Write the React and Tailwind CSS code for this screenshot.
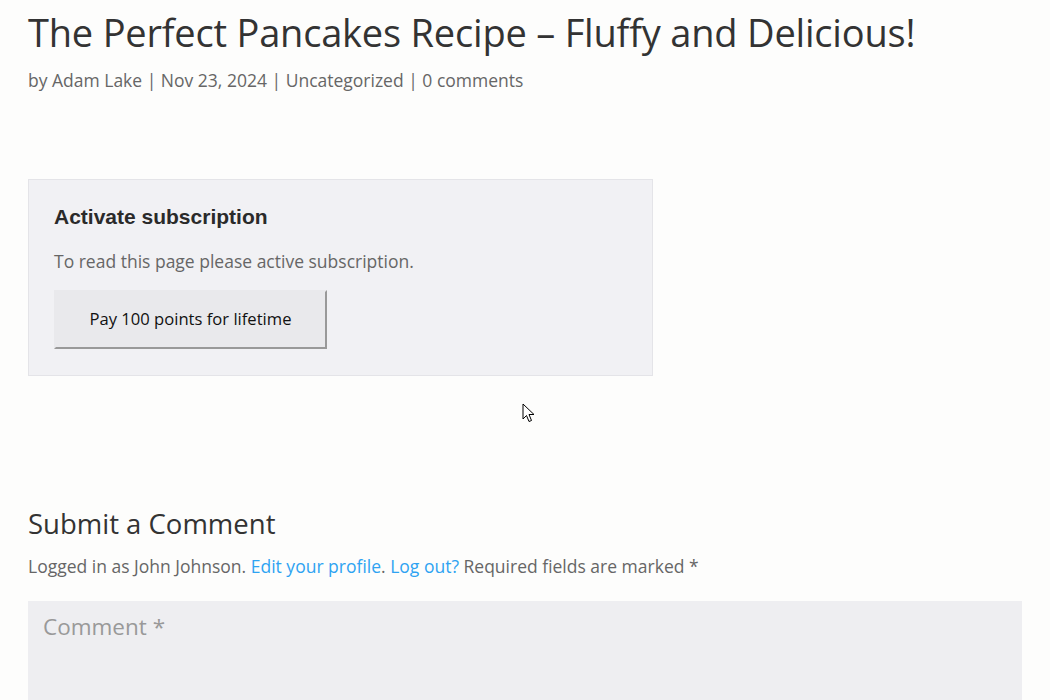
import React from 'react';

const BODY_FONT = "font-['Open_Sans',sans-serif]";

function Cursor() {
  return (
    <svg
      className="absolute left-[522px] top-[403px]"
      width="14"
      height="21"
      viewBox="0 0 14 21"
    >
      <path
        d="M1 1 L1 16 L4.5 12.5 L7 18.5 L9.5 17.5 L7 11.5 L12 11.5 Z"
        fill="#fff"
        stroke="#000"
        strokeWidth="1"
        strokeLinejoin="miter"
      />
    </svg>
  );
}

export default function App() {
  return (
    <div className={`relative h-[700px] w-[1050px] overflow-hidden bg-[#fdfdfc] ${BODY_FONT}`}>
      <div className="px-[28px] pt-[6px]">
        {/* Post header */}
        <h1 className="text-[38px] leading-[52px] text-[#333] tracking-[-0.2px]">
          The Perfect Pancakes Recipe – Fluffy and Delicious!
        </h1>
        <p className="mt-[9px] text-[17.5px] leading-[26px] text-[#666]">
          by Adam Lake | Nov 23, 2024 | Uncategorized | 0 comments
        </p>

        {/* Subscription box */}
        <div className="mt-[86px] w-[625px] border border-[#e4e4e8] bg-[#f1f1f4] px-[25px] pt-[24px] pb-[26px]">
          <h3 className="font-['Liberation_Sans',Arial,sans-serif] text-[21px] font-bold leading-[26px] text-[#2a2a2a]">
            Activate subscription
          </h3>
          <p className="mt-[18px] text-[17.5px] leading-[26px] text-[#666]">
            To read this page please active subscription.
          </p>
          <button className="mt-[16px] h-[59px] w-[273px] border-2 border-t-[#e9e9ec] border-l-[#e9e9ec] border-r-[#999] border-b-[#999] bg-[#e9e9ec] text-[16.6px] text-[#111]">
            Pay 100 points for lifetime
          </button>
        </div>

        {/* Comments */}
        <h2 className="mt-[130px] text-[27.5px] leading-[36px] text-[#333]">Submit a Comment</h2>
        <p className="mt-[11px] text-[17.5px] leading-[26px] text-[#666]">
          Logged in as John Johnson.{' '}
          <a className="text-[#2ea3f2]">Edit your profile</a>.{' '}
          <a className="text-[#2ea3f2]">Log out?</a> Required fields are marked *
        </p>
        <div className="mt-[22px] h-[200px] w-[994px] bg-[#eeeef1] px-[15px] pt-[11px]">
          <span className="text-[22.5px] leading-[30px] text-[#999]">Comment *</span>
        </div>
      </div>
      <Cursor />
    </div>
  );
}
